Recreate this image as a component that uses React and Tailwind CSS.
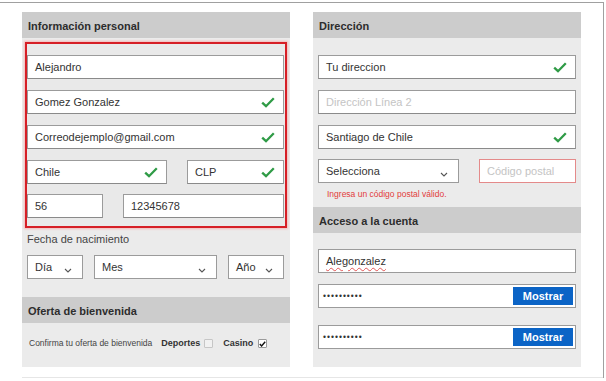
import React from 'react';

const Check = () => (
  <svg width="14" height="11" viewBox="0 0 14 11" className="shrink-0">
    <polyline points="1.2,5.6 5,9.2 12.8,1.2" fill="none" stroke="#2f9b46" strokeWidth="2.3" />
  </svg>
);

const Chevron = () => (
  <svg width="8" height="5" viewBox="0 0 8 5" className="shrink-0 mt-[6px]">
    <polyline points="1,1 4,4 7,1" fill="none" stroke="#555" strokeWidth="1.1" />
  </svg>
);

const Field = ({ value, placeholder, check, className = '', error }) => (
  <div
    className={`h-[24px] bg-white border ${error ? 'border-[#e48a8a]' : 'border-[#9b9b9b] border-b-[#8a8a8a]'} flex items-center justify-between pl-[7px] pr-[8px] ${className}`}
  >
    <span className={value ? 'text-[#333]' : 'text-[#c4c4c4]'}>{value || placeholder}</span>
    {check && <Check />}
  </div>
);

const Select = ({ label, className = '' }) => (
  <div className={`h-[24px] bg-white border border-[#9b9b9b] flex items-center justify-between pl-[7px] pr-[10px] ${className}`}>
    <span className="text-[#333]">{label}</span>
    <Chevron />
  </div>
);

const Password = () => (
  <div className="h-[24px] bg-white border border-[#9b9b9b] flex items-center justify-between pl-[4px] pr-[2px]">
    <span className="text-[#333] text-[8.5px] tracking-[1px]">••••••••••</span>
    <button className="w-[60px] h-[18px] bg-[#0b64c6] text-white font-bold text-[11px] flex items-center justify-center">
      Mostrar
    </button>
  </div>
);

const Header = ({ children }) => (
  <div className="h-[26px] bg-[#cccccc] flex items-center px-[6px] pt-[2px] font-bold text-[#2d2d2d] text-[11px]">
    {children}
  </div>
);

export default function App() {
  return (
    <div
      className="w-[606px] h-[381px] bg-white overflow-hidden text-[11px]"
      style={{ fontFamily: '"Liberation Sans", Arial, sans-serif' }}
    >
      <div className="mt-[2px] w-[604px] h-[376px] border-t border-r border-[#a0a0a0]">
        <div className="flex gap-[23px] pl-[22px] pt-[9px]">
          {/* Columna izquierda */}
          <div className="w-[268px] h-[355px] bg-[#ebebeb] flex flex-col">
            <Header>Información personal</Header>
            <div className="px-[3px] pt-[4px]">
              <div className="border-2 border-[#d61f26] shadow-[0_0_2px_1px_#f3b8b8] pt-[11px] pb-[8px] pr-[1px] flex flex-col gap-[11px] bg-[#e9e9e9]">
                <Field value="Alejandro" />
                <Field value="Gomez Gonzalez" check />
                <Field value="Correodejemplo@gmail.com" check />
                <div className="flex gap-[20px]">
                  <Field value="Chile" check className="w-[140px]" />
                  <Field value="CLP" check className="flex-1" />
                </div>
                <div className="flex gap-[20px] -mt-[1px]">
                  <Field value="56" className="w-[76px]" />
                  <Field value="12345678" className="flex-1" />
                </div>
              </div>
            </div>
            <div className="pl-[5px] pt-[3px] text-[#444] text-[11px] h-[20px]">Fecha de nacimiento</div>
            <div className="flex gap-[11px] pl-[5px] pr-[6px] mt-[7px]">
              <Select label="Día" className="w-[56px]" />
              <Select label="Mes" className="flex-1" />
              <Select label="Año" className="w-[56px]" />
            </div>
            <div className="mt-[18px]">
              <Header>Oferta de bienvenida</Header>
            </div>
            <div className="flex items-center pl-[7px] pt-[14px] text-[8.5px] text-[#444]">
              <span>Confirma tu oferta de bienvenida</span>
              <span className="ml-[9px] font-bold text-[9px] text-[#333]">Deportes</span>
              <span className="ml-[4px] w-[9px] h-[9px] border border-[#c6c6c6] bg-[#f1f1f1] rounded-[1px]" />
              <span className="ml-[10px] font-bold text-[9px] text-[#333]">Casino</span>
              <span className="ml-[5px] w-[9px] h-[9px] border border-[#9a9a9a] bg-white rounded-[1px] flex items-center justify-center">
                <svg width="7" height="6" viewBox="0 0 7 6">
                  <polyline points="0.8,3 2.6,5 6.2,0.8" fill="none" stroke="#111" strokeWidth="1.4" />
                </svg>
              </span>
            </div>
          </div>

          {/* Columna derecha */}
          <div className="w-[268px] h-[355px] bg-[#ebebeb] flex flex-col">
            <Header>Dirección</Header>
            <div className="px-[5px] pt-[17px] flex flex-col gap-[11px]">
              <Field value="Tu direccion" check />
              <Field placeholder="Dirección Línea 2" />
              <Field value="Santiago de Chile" check />
              <div className="flex gap-[20px] -mt-[1px]">
                <Select label="Selecciona" className="w-[141px]" />
                <Field placeholder="Código postal" error className="flex-1" />
              </div>
            </div>
            <div className="pl-[14px] pt-[5px] h-[24px] text-[8.5px] text-[#e23c3c]">Ingresa un código postal válido.</div>
            <Header>Acceso a la cuenta</Header>
            <div className="px-[5px] pt-[16px] flex flex-col">
              <div className="h-[24px] bg-white border border-[#9b9b9b] flex items-center pl-[7px]">
                <span className="text-[#333] underline decoration-wavy decoration-[#e25555] decoration-1 underline-offset-2">
                  Alegonzalez
                </span>
              </div>
              <div className="mt-[11px]">
                <Password />
              </div>
              <div className="mt-[17px]">
                <Password />
              </div>
            </div>
          </div>
        </div>
        <div className="ml-[22px] mt-[10px] border-t border-[#e6e6e6]" />
      </div>
    </div>
  );
}
